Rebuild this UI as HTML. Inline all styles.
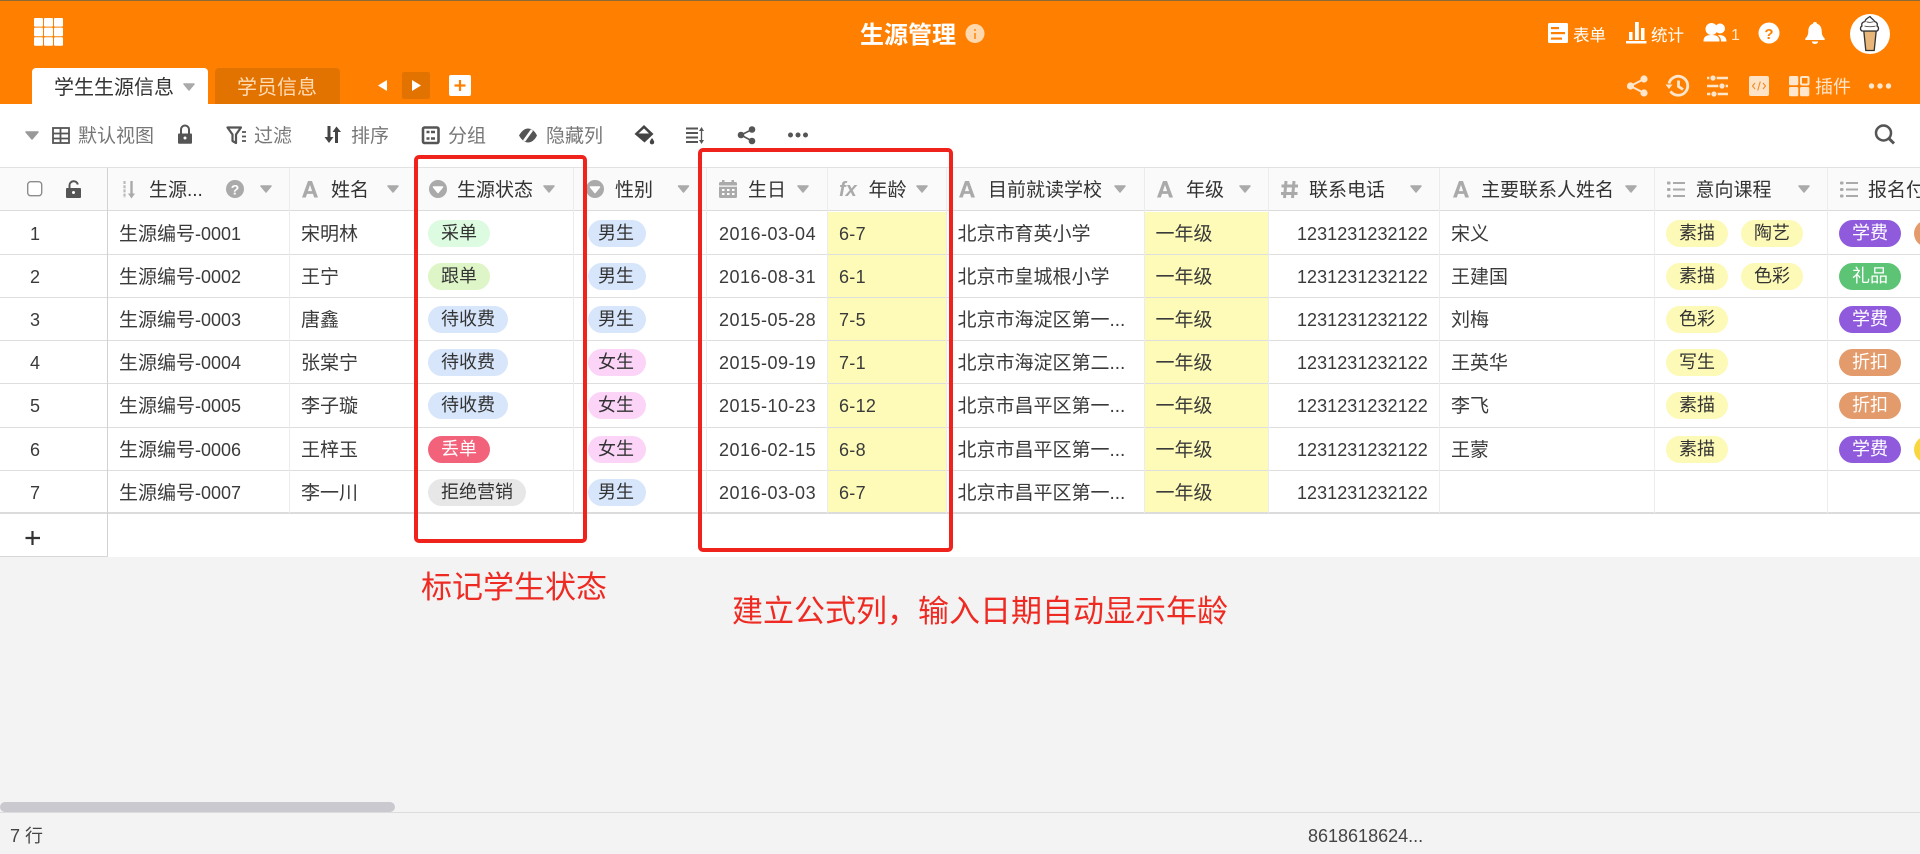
<!DOCTYPE html>
<html lang="zh"><head><meta charset="utf-8"><title>生源管理</title>
<style>
*{box-sizing:border-box;margin:0;padding:0}
html,body{width:1920px;height:854px;overflow:hidden;background:#f3f3f3;font-family:"Liberation Sans","Noto Sans CJK SC",sans-serif;color:#333}
.a{position:absolute;white-space:nowrap}
.top{left:0;top:0;width:1920px;height:104px;background:#ff8000;border-top:1px solid #8f6a35}
.tb{left:0;top:104px;width:1920px;height:64px;background:#fff}
.tbt{top:120.500px;line-height:32px;font-size:19px;color:#777}
.grid{left:0;top:168px;width:1920px;height:389px;background:#fff}
.hd{left:0;top:167px;width:1920px;height:44px;background:#fafafa;border-top:1px solid #e2e2e2;border-bottom:1px solid #dcdcdc}
.ht{top:173.500px;line-height:34px;font-size:19px;color:#333}
.row{left:0;width:1920px;height:43px;border-bottom:1px solid #dedede;font-size:19px;line-height:44px;color:#3a3a3a;overflow:hidden}
.row>*{position:absolute;top:0;white-space:nowrap;font-style:normal}
.row b{font-weight:400;font-size:18px}
.n{left:0;width:70px;text-align:center;font-size:18px}
.id{left:119px;line-height:45px}.nm{left:301px;line-height:46px}.dt{left:719px;font-size:18px;letter-spacing:.5px}
.ag{left:827px;width:119px;height:43px;background:#fefbb8;padding-left:12px;font-size:18px;letter-spacing:.3px}
.sc{left:957.5px;line-height:46px}
.gr{left:1144px;width:124px;height:43px;background:#fefbb8;padding-left:11.5px;line-height:46px}
.ph{left:1297px;font-size:18px;letter-spacing:.05px}.ct{left:1451px;line-height:46px}
.p{top:8px!important;height:27px;line-height:26px;border-radius:13.5px;font-size:18px;padding:0 13px;color:#333}
.st{left:428px}.sx{left:588px;padding:0 12px 0 10px}.c1{left:1666px}.c2{left:1741px}.f1{left:1839px}.f2{left:1914px}
.g1{background:#dcfbe1}.g2{background:#def5c7}.bl{background:#d7e6fb}.rd{background:#f2627b;color:#fff}.gy{background:#e7e7e7}.pk{background:#fbd4f7}
.ye{background:#fdf9b6}.pu{background:#8f5bdc;color:#fff}.gn{background:#5cc474;color:#fff}.or{background:#e49b6c;color:#fff}.yd{background:#f8d63e}
.v{top:168px;width:1px;height:345px;background:#ececec}
.box{border:4px solid #f0221c;border-radius:5px}
.note{color:#ee2a22;font-size:31px;line-height:40px}
svg{position:absolute;left:0;top:0;overflow:visible}
</style></head><body>

<div class="a top"></div>
<div class="a" style="left:32px;top:68px;width:176px;height:36px;background:#fff;border-radius:4px 4px 0 0"></div>
<div class="a" style="left:54px;top:69px;font-size:20px;line-height:38px;color:#333">学生生源信息</div>
<div class="a" style="left:215px;top:68px;width:125px;height:36px;background:#e37300;border-radius:4px 4px 0 0"></div>
<div class="a" style="left:237px;top:69px;font-size:20px;line-height:38px;color:#ffdcb5">学员信息</div>
<div class="a" style="left:402px;top:72px;width:28px;height:27px;background:#e37300;border-radius:2px"></div>
<div class="a" style="left:860px;top:20px;font-size:24px;line-height:32px;font-weight:700;color:#fff">生源管理</div>
<div class="a" style="left:1573px;top:24px;font-size:16.5px;line-height:24px;color:#fff">表单</div>
<div class="a" style="left:1651px;top:24px;font-size:16.5px;line-height:24px;color:#fff">统计</div>
<div class="a" style="left:1731px;top:24px;font-size:16px;line-height:24px;color:#ffe6cc">1</div>
<div class="a" style="left:1815px;top:73px;font-size:18px;line-height:28px;color:#ffe6cc">插件</div>

<div class="a tb"></div>
<div class="a tbt" style="left:78px">默认视图</div>
<div class="a tbt" style="left:254px">过滤</div>
<div class="a tbt" style="left:351px">排序</div>
<div class="a tbt" style="left:448px">分组</div>
<div class="a tbt" style="left:546px">隐藏列</div>

<div class="a grid"></div>
<div class="a hd"></div>
<div class="a ht" style="left:149px">生源...</div>
<div class="a ht" style="left:331px">姓名</div>
<div class="a ht" style="left:457px">生源状态</div>
<div class="a ht" style="left:615px">性别</div>
<div class="a ht" style="left:748px">生日</div>
<div class="a ht" style="left:868.5px">年龄</div>
<div class="a ht" style="left:988px">目前就读学校</div>
<div class="a ht" style="left:1186px">年级</div>
<div class="a ht" style="left:1309px">联系电话</div>
<div class="a ht" style="left:1481px">主要联系人姓名</div>
<div class="a ht" style="left:1695.5px">意向课程</div>
<div class="a ht" style="left:1868px">报名付</div>

<div class="a row" style="top:212px"><i class="n">1</i><i class="id">生源编号<b>-0001</b></i><i class="nm">宋明林</i><i class="p st g1">采单</i><i class="p sx bl">男生</i><i class="dt">2016-03-04</i><i class="ag">6-7</i><i class="sc">北京市育英小学</i><i class="gr">一年级</i><i class="ph">1231231232122</i><i class="ct">宋义</i><i class="p c1 ye">素描</i><i class="p c2 ye">陶艺</i><i class="p f1 pu">学费</i><i class="p f2 or">折扣</i></div>
<div class="a row" style="top:255px"><i class="n">2</i><i class="id">生源编号<b>-0002</b></i><i class="nm">王宁</i><i class="p st g2">跟单</i><i class="p sx bl">男生</i><i class="dt">2016-08-31</i><i class="ag">6-1</i><i class="sc">北京市皇城根小学</i><i class="gr">一年级</i><i class="ph">1231231232122</i><i class="ct">王建国</i><i class="p c1 ye">素描</i><i class="p c2 ye">色彩</i><i class="p f1 gn">礼品</i></div>
<div class="a row" style="top:298px"><i class="n">3</i><i class="id">生源编号<b>-0003</b></i><i class="nm">唐鑫</i><i class="p st bl">待收费</i><i class="p sx bl">男生</i><i class="dt">2015-05-28</i><i class="ag">7-5</i><i class="sc">北京市海淀区第一...</i><i class="gr">一年级</i><i class="ph">1231231232122</i><i class="ct">刘梅</i><i class="p c1 ye">色彩</i><i class="p f1 pu">学费</i></div>
<div class="a row" style="top:341px"><i class="n">4</i><i class="id">生源编号<b>-0004</b></i><i class="nm">张棠宁</i><i class="p st bl">待收费</i><i class="p sx pk">女生</i><i class="dt">2015-09-19</i><i class="ag">7-1</i><i class="sc">北京市海淀区第二...</i><i class="gr">一年级</i><i class="ph">1231231232122</i><i class="ct">王英华</i><i class="p c1 ye">写生</i><i class="p f1 or">折扣</i></div>
<div class="a row" style="top:384px;height:44px"><i class="n">5</i><i class="id">生源编号<b>-0005</b></i><i class="nm">李子璇</i><i class="p st bl">待收费</i><i class="p sx pk">女生</i><i class="dt">2015-10-23</i><i class="ag" style="height:44px">6-12</i><i class="sc">北京市昌平区第一...</i><i class="gr" style="height:44px">一年级</i><i class="ph">1231231232122</i><i class="ct">李飞</i><i class="p c1 ye">素描</i><i class="p f1 or">折扣</i></div>
<div class="a row" style="top:428px"><i class="n">6</i><i class="id">生源编号<b>-0006</b></i><i class="nm">王梓玉</i><i class="p st rd">丢单</i><i class="p sx pk">女生</i><i class="dt">2016-02-15</i><i class="ag">6-8</i><i class="sc">北京市昌平区第一...</i><i class="gr">一年级</i><i class="ph">1231231232122</i><i class="ct">王蒙</i><i class="p c1 ye">素描</i><i class="p f1 pu">学费</i><i class="p f2 yd">定金</i></div>
<div class="a row" style="top:471px;border-bottom:2px solid #dcdcdc"><i class="n">7</i><i class="id">生源编号<b>-0007</b></i><i class="nm">李一川</i><i class="p st gy">拒绝营销</i><i class="p sx bl">男生</i><i class="dt">2016-03-03</i><i class="ag">6-7</i><i class="sc">北京市昌平区第一...</i><i class="gr">一年级</i><i class="ph">1231231232122</i></div>

<div class="a v" style="left:107px;height:389px;background:#d2d2d2"></div>
<div class="a v" style="left:289px"></div>
<div class="a v" style="left:573px"></div>
<div class="a v" style="left:706px"></div>
<div class="a v" style="left:827px"></div>
<div class="a v" style="left:946px"></div>
<div class="a v" style="left:1144px"></div>
<div class="a v" style="left:1268px"></div>
<div class="a v" style="left:1439px"></div>
<div class="a v" style="left:1654px"></div>
<div class="a v" style="left:1827px"></div>
<div class="a" style="left:0;top:556px;width:108px;height:1px;background:#d8d8d8"></div>

<div class="a" style="left:0;top:802px;width:395px;height:10px;background:#c9c9cf;border-radius:5px"></div>
<div class="a" style="left:0;top:812px;width:1920px;height:1px;background:#dcdcdc"></div>
<div class="a" style="left:10px;top:822px;font-size:18px;line-height:28px;color:#444">7 行</div>
<div class="a" style="left:1308px;top:822px;font-size:18px;line-height:28px;color:#444">8618618624...</div>

<svg width="1920" height="854" viewBox="0 0 1920 854" xmlns="http://www.w3.org/2000/svg">
<defs>
<symbol id="car" viewBox="0 0 12 8" overflow="visible"><path d="M1 1h10L6 7z" fill="#aaa" stroke="#aaa" stroke-width="1.5" stroke-linejoin="round"/></symbol>
<symbol id="A" viewBox="0 0 16 18" preserveAspectRatio="none"><path d="M0 18 6 0h4L16 18h-3.800l-1.200-4H5l-1.200 4zM5.900 11h4.200L8 4.200z" fill="#aaa"/></symbol>
<symbol id="sel" viewBox="0 0 18 18"><circle cx="9" cy="9" r="9" fill="#aaa"/><path d="M4.500 7h9L9 12.500z" fill="#fff" stroke="#fff" stroke-width="1.500" stroke-linejoin="round"/></symbol>
<symbol id="lst" viewBox="0 0 18 16"><g fill="#aaa"><rect y="0" width="3.500" height="3" rx="1"/><rect y="6.500" width="3.500" height="3" rx="1"/><rect y="13" width="3.500" height="3" rx="1"/><rect x="6" y=".5" width="12" height="2"/><rect x="6" y="7" width="12" height="2"/><rect x="6" y="13.500" width="12" height="2"/></g></symbol>
</defs>

<!-- top bar left -->
<g fill="#fff">
<rect x="34" y="18" width="9" height="8.600" rx="1"/><rect x="44" y="18" width="9" height="8.600" rx="1"/><rect x="54" y="18" width="9" height="8.600" rx="1"/>
<rect x="34" y="27.600" width="9" height="8.600" rx="1"/><rect x="44" y="27.600" width="9" height="8.600" rx="1"/><rect x="54" y="27.600" width="9" height="8.600" rx="1"/>
<rect x="34" y="37.200" width="9" height="8.600" rx="1"/><rect x="44" y="37.200" width="9" height="8.600" rx="1"/><rect x="54" y="37.200" width="9" height="8.600" rx="1"/>
<path d="M387 80v11l-9-5.500z"/><path d="M412 80v11l9-5.500z"/>
<rect x="449" y="75" width="22" height="21" rx="2"/>
</g>
<path d="M460 80v11M454.500 85.500h11" stroke="#ff8000" stroke-width="2.200"/>
<use href="#car" x="183" y="83" width="12" height="8"/>
<circle cx="975" cy="33.500" r="9.500" fill="#ffd8ad"/><rect x="974" y="33" width="2" height="6" fill="#ff8000" opacity=".7"/><rect x="974" y="29" width="2" height="2" fill="#ff8000" opacity=".7"/>

<!-- top right row 1 -->
<rect x="1548" y="23" width="20" height="20" rx="1.500" fill="#fff"/>
<g fill="#ff8000"><rect x="1551" y="27" width="8" height="2.200"/><rect x="1551" y="32" width="14" height="2.200"/><rect x="1551" y="37.500" width="11" height="2.200"/></g>
<g fill="#fff"><rect x="1629" y="32" width="3.500" height="8"/><rect x="1635" y="22" width="3.800" height="18"/><rect x="1641" y="28" width="3.500" height="12"/><rect x="1626" y="41" width="20.500" height="2.500"/></g>
<g fill="#fff">
<circle cx="1720" cy="28.500" r="5"/><path d="M1719 35c4.500 0 7.500 2 7.500 6.500h-5.500c0-2.500-.5-4.500-3-6z"/>
<circle cx="1711.500" cy="29" r="6"/><path d="M1703.500 41.500c0-4.500 2-6.500 8-6.500s8 2 8 6.500z"/>
<circle cx="1769" cy="33" r="10.500"/>
<path d="M1815 22c1.300 0 2 .8 2 1.800 3.300 1 4.700 4 4.700 7.500 0 3.200 1 5.300 3 7.200v1.500h-19.400v-1.500c2-1.900 3-4 3-7.200 0-3.500 1.400-6.500 4.700-7.500 0-1 .7-1.800 2-1.800zM1811.800 41.500h6.400c-.3 1.700-1.600 2.500-3.200 2.500s-2.900-.8-3.200-2.500z"/>
</g>
<text x="1769" y="39" text-anchor="middle" font-family="Liberation Sans" font-weight="700" font-size="15" fill="#ff8000">?</text>
<!-- avatar -->
<circle cx="1870" cy="34" r="20" fill="#fff"/>
<path d="M1863.800 31h12.400l-2 19.500h-8.400z" fill="#e9b67a" stroke="#333" stroke-width="1.300" stroke-linejoin="round"/>
<path d="M1862 31c-2-1-2-4 0-5-1-3 1-4 3-4.500 0-2 2-3 5-5 1 2 4 3 4.500 5 2 .5 3.500 2 2.500 4.500 2 1 2 4 0 5z" fill="#fff" stroke="#333" stroke-width="1.300" stroke-linejoin="round"/>
<path d="M1864.500 26c3.500 1 7.500 1 11 0M1866.500 21.800c2.300.8 5 .6 7 0" stroke="#333" stroke-width=".8" fill="none"/>

<!-- top right row 2 -->
<g fill="#ffe6cc">
<circle cx="1630.500" cy="86" r="3.600"/><circle cx="1644" cy="79" r="3.600"/><circle cx="1644" cy="93" r="3.600"/>
</g>
<path d="M1644 79 1630.500 86 1644 93" fill="none" stroke="#ffe6cc" stroke-width="2"/>
<g fill="none" stroke="#ffe6cc" stroke-width="2.800">
<path d="M1669 83.500a9.500 9.500 0 1 1 1.500 7.800"/><path d="M1678.500 80.500v6l4.500 3"/>
</g>
<path d="M1665.500 84.500h7l-3.500 4.500z" fill="#ffe6cc"/>
<g stroke="#ffe6cc" stroke-width="2.400"><path d="M1707 78h21M1707 86h21M1707 94h21"/></g>
<g fill="#ffe6cc" stroke="#ff8000" stroke-width="1.200"><circle cx="1713" cy="78" r="3.200"/><circle cx="1722" cy="86" r="3.200"/><circle cx="1714" cy="94" r="3.200"/></g>
<rect x="1749" y="76" width="20" height="20" rx="2" fill="#ffe3c6"/>
<path d="M1755 83l-2.500 3 2.500 3M1763 83l2.500 3-2.500 3M1760.300 81.500l-2.600 9" fill="none" stroke="#f08a25" stroke-width="1.100"/>
<g fill="#ffe6cc">
<rect x="1789" y="76" width="9.300" height="9.300" rx="1.500"/><rect x="1789" y="87" width="9.300" height="9.300" rx="1.500"/><rect x="1800" y="87" width="9.300" height="9.300" rx="1.500"/>
<circle cx="1871.500" cy="86" r="2.700"/><circle cx="1880" cy="86" r="2.700"/><circle cx="1888.500" cy="86" r="2.700"/>
</g>
<rect x="1801" y="77" width="7.500" height="7.500" rx="1" fill="none" stroke="#ffe6cc" stroke-width="2"/>

<!-- toolbar -->
<path d="M26 132h12l-6 7z" fill="#999" stroke="#999" stroke-width="1.500" stroke-linejoin="round"/>
<g fill="none" stroke="#555" stroke-width="1.800">
<rect x="53" y="128" width="16" height="15"/><path d="M53 133.500h16M53 138.500h16M60.500 128v15"/>
<path d="M181 134v-4.500a4 4 0 0 1 8 0v4.500" stroke-width="2"/>
</g>
<rect x="178" y="133.500" width="14" height="10.200" rx="1" fill="#555"/><circle cx="185" cy="138" r="1.500" fill="#fff"/>
<path d="M227.500 127.500h13.500l-5 7v8.500l-3.500-2v-6.500z" fill="none" stroke="#555" stroke-width="2.200" stroke-linejoin="round"/>
<path d="M242 132h4M242 136.500h4M242 141h4" stroke="#555" stroke-width="1.800"/>
<path d="M330 127v11h3l-4.500 6-4.500-6h3v-11z" transform="translate(.5 -1)" fill="#444"/>
<path d="M335 143v-11h-2.500l4-5.500 4.500 5.500h-3v11z" fill="#444"/>
<rect x="423" y="127.500" width="15.500" height="15.500" rx="1.500" fill="none" stroke="#555" stroke-width="2.600"/>
<path d="M426.500 132h3M426.500 138.500h3M431 132h4M431 138.500h4" stroke="#555" stroke-width="2.400"/>
<path d="M519 135.500c3-5 6-7 9-7 3.200 0 6.500 2 9 7-2.500 5-5.800 7-9 7-3 0-6-2-9-7z" fill="#555"/>
<path d="M532 130 524 141" stroke="#fff" stroke-width="2.600"/>
<path d="M644 125l9.500 9-9 8.500-10-8.500z" fill="#444"/>
<path d="M644 128.500l5 5h-10.500z" fill="#fff"/>
<path d="M652 138c1.500 2 2.200 3.200 2.200 4.200a2.200 2.200 0 0 1-4.400 0c0-1 .7-2.200 2.200-4.200z" fill="#444"/>
<path d="M686 128.500h12M686 133h12M686 137.500h12M686 142h12" stroke="#555" stroke-width="2"/>
<path d="M701.500 129v13" stroke="#555" stroke-width="1.300"/><path d="M699 131l2.500-4 2.500 4zM699 140l2.500 4 2.500-4z" fill="#555"/>
<g fill="#555"><circle cx="741" cy="135" r="3.300"/><circle cx="752" cy="129.500" r="3.300"/><circle cx="752" cy="141" r="3.300"/><circle cx="790.500" cy="135" r="2.500"/><circle cx="798" cy="135" r="2.500"/><circle cx="805.500" cy="135" r="2.500"/></g>
<path d="M752 129.500 741 135l11 6" fill="none" stroke="#555" stroke-width="1.600"/>
<circle cx="1883.500" cy="133" r="7.500" fill="none" stroke="#555" stroke-width="2.500"/><path d="M1889 138.500l5 5" stroke="#555" stroke-width="3"/>

<!-- header icons -->
<rect x="27.700" y="181.700" width="14" height="14" rx="3" fill="#fff" stroke="#8c8c8c" stroke-width="1.400"/>
<path d="M69.500 189v-3.500a4.200 4.200 0 0 1 8.300-1" fill="none" stroke="#555" stroke-width="2"/>
<rect x="66" y="188" width="15" height="10" rx="1" fill="#555"/><circle cx="73.500" cy="192.500" r="1.500" fill="#fff"/>
<path d="M124.500 181v17" stroke="#bbb" stroke-width="2.200" stroke-dasharray="3 1.200"/>
<path d="M131.500 181v14" stroke="#aaa" stroke-width="2.400"/><path d="M128 193.500h7l-3.500 5z" fill="#aaa"/>
<circle cx="235" cy="189" r="9" fill="#aaa"/>
<text x="235" y="194.500" text-anchor="middle" font-family="Liberation Sans" font-weight="700" font-size="14" fill="#fff">?</text>
<use href="#car" x="260" y="185" width="12" height="8"/>
<use href="#A" x="302" y="181" width="16" height="16.500"/><use href="#car" x="387" y="185" width="12" height="8"/>
<use href="#sel" x="429" y="180" width="18" height="18"/><use href="#car" x="543" y="185" width="12" height="8"/>
<use href="#sel" x="586" y="180" width="18" height="18"/><use href="#car" x="677.500" y="185" width="12" height="8"/>
<g fill="#aaa"><rect x="719" y="182" width="18" height="16" rx="1.500"/><rect x="722" y="180" width="2.500" height="4"/><rect x="731.500" y="180" width="2.500" height="4"/></g>
<g fill="#fff"><rect x="719" y="185.500" width="18" height="1.200"/><rect x="722" y="189" width="2.500" height="2"/><rect x="727" y="189" width="2.500" height="2"/><rect x="732" y="189" width="2.500" height="2"/><rect x="722" y="193" width="2.500" height="2"/><rect x="727" y="193" width="2.500" height="2"/><rect x="732" y="193" width="2.500" height="2"/></g>
<use href="#car" x="797" y="185" width="12" height="8"/>
<text x="839" y="196" font-family="Liberation Sans" font-style="italic" font-weight="700" font-size="20" fill="#aaa">fx</text>
<use href="#car" x="916" y="185" width="12" height="8"/>
<use href="#A" x="959" y="181" width="16" height="16.500"/><use href="#car" x="1114" y="185" width="12" height="8"/>
<use href="#A" x="1157" y="181" width="16" height="16.500"/><use href="#car" x="1239" y="185" width="12" height="8"/>
<path d="M1286 181l-1.500 17M1294 181l-1.500 17M1281.500 186h16.500M1281 193.500h16.500" stroke="#aaa" stroke-width="3"/>
<use href="#car" x="1410" y="185" width="12" height="8"/>
<use href="#A" x="1453" y="181" width="16" height="16.500"/><use href="#car" x="1625" y="185" width="12" height="8"/>
<use href="#lst" x="1667" y="181.500" width="18" height="16"/><use href="#car" x="1798" y="185" width="12" height="8"/>
<use href="#lst" x="1840" y="181.500" width="18" height="16"/>
<!-- add row -->
<path d="M32.500 531v14M25.500 538h14.500" stroke="#333" stroke-width="2.200"/>
</svg>

<div class="a box" style="left:414px;top:155px;width:173px;height:388px"></div>
<div class="a box" style="left:698px;top:148px;width:255px;height:404px"></div>
<div class="a note" style="left:421px;top:568px">标记学生状态</div>
<div class="a note" style="left:732px;top:591.500px">建立公式列，输入日期自动显示年龄</div>
</body></html>
